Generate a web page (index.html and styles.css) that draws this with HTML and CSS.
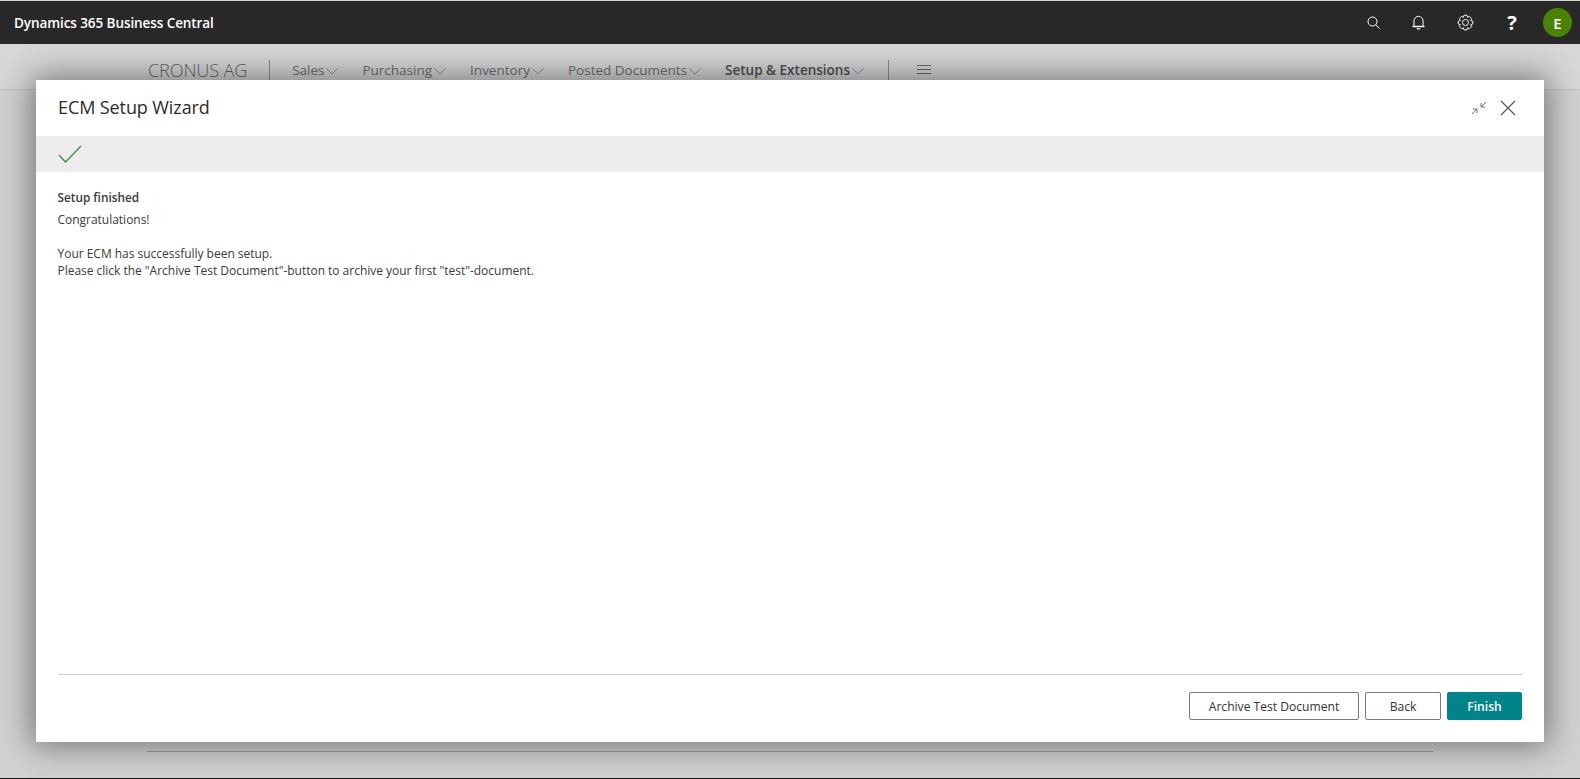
FILE: index.html
```html
<!DOCTYPE html>
<html lang="en">
<head>
<meta charset="utf-8">
<title>ECM Setup Wizard</title>
<link rel="stylesheet" href="styles.css">
</head>
<body>
<div class="page">
  <header class="topbar">
    <div class="brand">Dynamics 365 Business Central</div>
    <div class="tools">
      <svg class="tool t-search" width="13" height="13" viewBox="0 0 13 13"><circle cx="5.500" cy="5.500" r="4.500"/><path d="M8.800 8.800L12.500 12.500"/></svg>
      <svg class="tool t-bell" width="13" height="15" viewBox="0 0 13 15"><path d="M2 11.500V5.800a4.500 4.500 0 0 1 9 0v5.700"/><path d="M.5 11.500h12" stroke-width="1.400"/><path d="M4.800 13.800h3.400" stroke-width="1.200"/></svg>
      <svg class="tool t-gear" width="17" height="17" viewBox="0 0 18 18"><circle cx="9" cy="9" r="3.200"/><path d="M7.400 1.300h3.200l.6 2.200 2.100-.9 2.200 2.200-1 2.100 2.200.7v3l-2.200.7 1 2.100-2.200 2.200-2.100-1-.6 2.300H7.400l-.6-2.300-2.100 1-2.200-2.200 1-2.100-2.200-.7v-3l2.200-.7-1-2.100 2.200-2.200 2.100.9z"/></svg>
      <span class="help">?</span>
      <span class="avatar">E</span>
    </div>
  </header>
  <nav class="navbar">
    <span class="company">CRONUS AG</span>
    <span class="sep"></span>
    <span class="menu">Sales<svg class="chev" width="12" height="7" viewBox="0 0 12 7"><path d="M.5.5L6 6l5.500-5.500"/></svg></span>
    <span class="menu">Purchasing<svg class="chev" width="12" height="7" viewBox="0 0 12 7"><path d="M.5.5L6 6l5.500-5.500"/></svg></span>
    <span class="menu">Inventory<svg class="chev" width="12" height="7" viewBox="0 0 12 7"><path d="M.5.5L6 6l5.500-5.500"/></svg></span>
    <span class="menu">Posted Documents<svg class="chev" width="12" height="7" viewBox="0 0 12 7"><path d="M.5.5L6 6l5.500-5.500"/></svg></span>
    <span class="menu active">Setup &amp; Extensions<svg class="chev" width="12" height="7" viewBox="0 0 12 7"><path d="M.5.5L6 6l5.500-5.500"/></svg></span>
    <span class="sep sep2"></span>
    <svg class="burger" width="14" height="10" viewBox="0 0 14 10"><path d="M0 .5h14M0 4.500h14M0 8.500h14"/></svg>
  </nav>
  <main class="backdrop"><div class="rule"></div></main>
</div>
<section class="modal">
  <div class="modal-head">
    <h1>ECM Setup Wizard</h1>
    <div class="modal-actions">
      <svg class="shrink" width="16" height="14" viewBox="0 0 16 14"><path d="M1 13l5-5M2 8h4v4M15 1l-5 5M14 6h-4V2"/></svg>
      <svg class="close" width="16" height="16" viewBox="0 0 16 16"><path d="M1 1l14 14M15 1L1 15"/></svg>
    </div>
  </div>
  <div class="steps">
    <svg class="check" width="24" height="18" viewBox="0 0 24 18"><path d="M1 10l6.500 7L23 1"/></svg>
  </div>
  <div class="body">
    <h2>Setup finished</h2>
    <p class="congrats">Congratulations!</p>
    <p>Your ECM has successfully been setup.<br>Please click the "Archive Test Document"-button to archive your first "test"-document.</p>
  </div>
  <footer class="foot">
    <button class="btn archive">Archive Test Document</button>
    <button class="btn back">Back</button>
    <button class="btn primary">Finish</button>
  </footer>
</section>
</body>
</html>
```

FILE: styles.css
```css
* { box-sizing: border-box; }
html, body { margin: 0; height: 100%; overflow: hidden; }
body {
  font-family: "Open Sans", "Noto Sans", sans-serif;
  font-size: 12px;
  color: #333;
  background: #d0d2d1;
  border-bottom: 1px solid #111;
}
.page { display: flex; flex-direction: column; height: 778px; }
.topbar {
  height: 43px;
  margin-top: 1px;
  background: #282828;
  color: #fff;
  display: flex;
  align-items: center;
  justify-content: space-between;
  padding: 0 8px 0 14px;
}
.brand { font-size: 13.500px; font-weight: 600; letter-spacing: -.08px; }
.tools { display: flex; align-items: center; }
.tool { fill: none; stroke: #fff; stroke-width: 1; }
.t-search { margin-right: 32px; }
.t-bell { margin-right: 32px; }
.t-gear { margin-right: 33px; }
.help { font-size: 20px; font-weight: 700; width: 10px; margin-right: 26px; line-height: 1; text-align: center; }
.avatar {
  width: 29px; height: 29px; border-radius: 50%;
  background: #498205;
  display: flex; align-items: center; justify-content: center;
  font-size: 15px; font-weight: 600;
}
.navbar {
  height: 46px;
  background: #d7d7d7;
  display: flex;
  align-items: center;
  padding: 6px 0 0 148px;
  color: #6e7072;
  font-size: 13.500px;
  border-bottom: 1px solid #c3c5c4;
}
.company { font-size: 18.200px; font-weight: 300; margin-right: 22px; letter-spacing: -.2px; color: #666; }
.sep { width: 1px; height: 20px; background: #8c8c8c; margin-right: 22px; }
.sep2 { margin: 0; }
.menu { display: flex; align-items: center; margin-right: 24px; }
.active { font-weight: 600; color: #4f5052; }
.chev { fill: none; stroke: #8e9092; margin-left: 2px; margin-top: 3px; }
.burger { fill: none; stroke: #666; margin-left: 28px; }
.backdrop { flex: 1; padding: 661px 147px 0; }
.rule { height: 1px; background: #9e9f9f; }
.modal {
  position: absolute;
  left: 36px; top: 80px;
  width: 1508px; height: 662px;
  background: #fff;
  box-shadow: 0 0 30px 4px rgba(0,0,0,.45);
  display: flex;
  flex-direction: column;
}
.modal-head {
  height: 56px;
  display: flex;
  align-items: center;
  justify-content: space-between;
  padding: 0 28px 0 22px;
}
h1 { margin: 0 0 2px; font-size: 18px; font-weight: 500; color: #2b2b2b; letter-spacing: -.1px; }
.modal-actions { display: flex; align-items: center; gap: 13px; }
.shrink { fill: none; stroke: #707070; }
.close { fill: none; stroke: #555; stroke-width: 1.200; }
.steps { height: 36px; background: #ededed; display: flex; align-items: center; padding-left: 22px; }
.check { fill: none; stroke: #3b9137; stroke-width: 1.300; }
.body { flex: 1; padding: 17px 22px 0 21.500px; line-height: 17px; color: #3a3a3a; }
h2 { margin: 0 0 5px; font-size: 11.800px; font-weight: 600; line-height: 17px; }
p { margin: 0; letter-spacing: -.02px; }
.congrats { margin-bottom: 17px; }
.foot {
  margin: 0 22px;
  height: 68px;
  border-top: 1px solid #d0d0d0;
  display: flex;
  justify-content: flex-end;
  align-items: flex-start;
  padding-top: 17px;
  gap: 6px;
}
.btn {
  height: 28px;
  padding: 0;
  font: inherit;
  font-size: 12.100px;
  background: #fff;
  color: #333;
  border: 1px solid #7a7a7a;
  border-radius: 2px;
}
.archive { width: 170px; }
.back { width: 76px; }
.primary {
  width: 75px;
  background: #008489;
  border-color: #008489;
  color: #fff;
  font-weight: 600;
}
```
